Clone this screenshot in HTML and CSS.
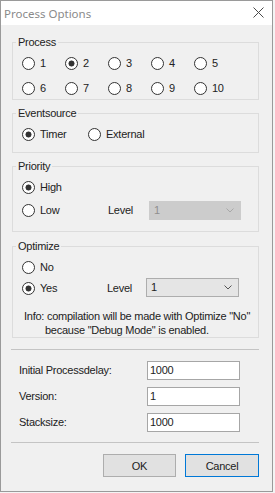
FILE: index.html
```html
<!DOCTYPE html>
<html lang="en">
<head>
<meta charset="UTF-8">
<title>Process Options</title>
<link rel="stylesheet" href="styles.css">
</head>
<body>
<div class="dialog">
  <div class="titlebar">
    <span class="title">Process Options</span>
    <svg class="close" width="11" height="11" viewBox="0 0 11 11"><path d="M0.5 0.5 L10.5 10.5 M10.5 0.5 L0.5 10.5" stroke="#4a4a4a" stroke-width="1" fill="none"/></svg>
  </div>

  <div class="content">
    <!-- Process number -->
    <fieldset class="group group-process">
      <legend>Process</legend>
      <div class="process-grid">
        <label class="opt"><span class="radio"></span>1</label>
        <label class="opt"><span class="radio on"></span>2</label>
        <label class="opt"><span class="radio"></span>3</label>
        <label class="opt"><span class="radio"></span>4</label>
        <label class="opt"><span class="radio"></span>5</label>
        <label class="opt"><span class="radio"></span>6</label>
        <label class="opt"><span class="radio"></span>7</label>
        <label class="opt"><span class="radio"></span>8</label>
        <label class="opt"><span class="radio"></span>9</label>
        <label class="opt"><span class="radio"></span>10</label>
      </div>
    </fieldset>

    <fieldset class="group group-event">
      <legend>Eventsource</legend>
      <div class="row">
        <label class="opt opt-timer"><span class="radio on"></span>Timer</label>
        <label class="opt"><span class="radio"></span>External</label>
      </div>
    </fieldset>

    <fieldset class="group group-priority">
      <legend>Priority</legend>
      <div class="row">
        <label class="opt"><span class="radio on"></span>High</label>
      </div>
      <div class="row row-level">
        <label class="opt opt-wide"><span class="radio"></span>Low</label>
        <span class="level-label">Level</span>
        <div class="combo combo-disabled">
          <span>1</span>
          <svg width="8" height="5" viewBox="0 0 8 5"><path d="M0.5 0.5 L4 4 L7.5 0.5" stroke="#a8a8a8" fill="none"/></svg>
        </div>
      </div>
    </fieldset>

    <fieldset class="group group-optimize">
      <legend>Optimize</legend>
      <div class="row">
        <label class="opt"><span class="radio"></span>No</label>
      </div>
      <div class="row row-level row-yes">
        <label class="opt opt-wide2"><span class="radio on"></span>Yes</label>
        <span class="level-label">Level</span>
        <div class="combo combo-opt">
          <span>1</span>
          <svg width="8" height="5" viewBox="0 0 8 5"><path d="M0.5 0.5 L4 4 L7.5 0.5" stroke="#555" fill="none"/></svg>
        </div>
      </div>
      <div class="info">
        <span class="info-line">Info: compilation will be made with Optimize "No"</span>
        <span class="info-line info-indent">because "Debug Mode" is enabled.</span>
      </div>
    </fieldset>

    <div class="sep"></div>

    <div class="fields">
      <div class="field"><span class="field-label">Initial Processdelay:</span><div class="input">1000</div></div>
      <div class="field"><span class="field-label">Version:</span><div class="input">1</div></div>
      <div class="field"><span class="field-label">Stacksize:</span><div class="input">1000</div></div>
    </div>

    <div class="sep"></div>

    <div class="buttons">
      <button class="btn">OK</button>
      <button class="btn btn-default">Cancel</button>
    </div>
  </div>
</div>
</body>
</html>
```
FILE: styles.css
```css
body { margin: 0; background: #f4f4f4; font-family: "Liberation Sans", Arial, sans-serif; font-size: 11px; letter-spacing: -0.25px; color: #222; }

.dialog {
  width: 273px;
  height: 492px;
  box-sizing: border-box;
  border: 1px solid #9a9a9a;
  background: #f0f0f0;
  display: flex;
  flex-direction: column;
}

/* Title bar (inactive window) */
.titlebar {
  height: 24px;
  background: #fff;
  display: flex;
  align-items: center;
  justify-content: space-between;
  padding: 0 8px 0 3px;
  flex-shrink: 0;
}
.title { font-family: "Noto Sans", sans-serif; font-size: 11.5px; letter-spacing: 0; color: #8a8a8a; }
.close { display: block; margin-top: -1px; }

.content { display: flex; flex-direction: column; }

/* Group boxes */
.group {
  margin: 0 0 0 11px;
  width: 247px;
  box-sizing: border-box;
  border: 1px solid #dcdcdc;
  padding: 6px 0 0 9px;
  min-inline-size: 0;
}
.group legend { padding: 0 2px; margin-left: -6px; line-height: 12px; }
.group-process { margin-top: 11px; padding-bottom: 2px; }
.group-event { margin-top: 7px; padding-bottom: 9px; }
.group-priority { margin-top: 7px; padding-bottom: 11px; }
.group-optimize { margin-top: 8px; padding-bottom: 0; }

.process-grid { display: grid; grid-template-columns: repeat(5, 43px); grid-auto-rows: 18px; row-gap: 7px; }

.row { display: flex; align-items: center; height: 18px; }
.row-level { height: 20px; margin-top: 4px; }
.row-yes { margin-top: 2px; }

.opt { display: flex; align-items: center; gap: 5px; }
.opt-timer { width: 66px; }
.opt-wide { width: 86px; }
.opt-wide2 { width: 85px; }

.radio {
  width: 13px;
  height: 13px;
  box-sizing: border-box;
  border: 1px solid #333;
  border-radius: 50%;
  background: #fff;
  flex-shrink: 0;
}
.radio.on { background: radial-gradient(circle, #333 0 2.7px, #fff 3.3px); }

.level-label { width: 41px; }
.row-yes .level-label { width: 39px; }

/* Combo boxes */
.combo {
  height: 19px;
  box-sizing: border-box;
  display: flex;
  align-items: center;
  justify-content: space-between;
  padding: 0 6px 0 4px;
}
.combo-disabled { width: 92px; background: #cccccc; border: 1px solid #cccccc; color: #8f8f8f; }
.combo-opt { width: 93px; background: #e5e5e5; border: 1px solid #adadad; margin-top: -2px; }

.info { margin-top: 11px; line-height: 14px; display: flex; flex-direction: column; }
.info-line { display: block; margin-left: 2px; white-space: nowrap; }
.info-indent { margin-left: 23px; }

.sep { height: 1px; background: #c4c4c4; margin: 11px 0 0 10px; width: 248px; }

/* Text fields */
.fields { display: flex; flex-direction: column; gap: 8px; margin-top: 11px; }
.field { display: flex; align-items: center; height: 18px; }
.field-label { width: 128px; margin-left: 18px; }
.input {
  width: 93px;
  height: 19px;
  box-sizing: border-box;
  background: #fff;
  border: 1px solid #a6a6a6;
  padding: 0 2px;
  line-height: 17px;
}

/* Buttons */
.buttons { display: flex; justify-content: flex-end; gap: 9px; margin-top: 11px; padding-right: 13px; }
.btn {
  width: 73px;
  height: 23px;
  box-sizing: border-box;
  background: #e1e1e1;
  border: 1px solid #adadad;
  font: inherit;
  letter-spacing: -0.25px;
  color: #222;
  padding: 0;
}
.btn-default { width: 74px; border-color: #0078d7; }
```
